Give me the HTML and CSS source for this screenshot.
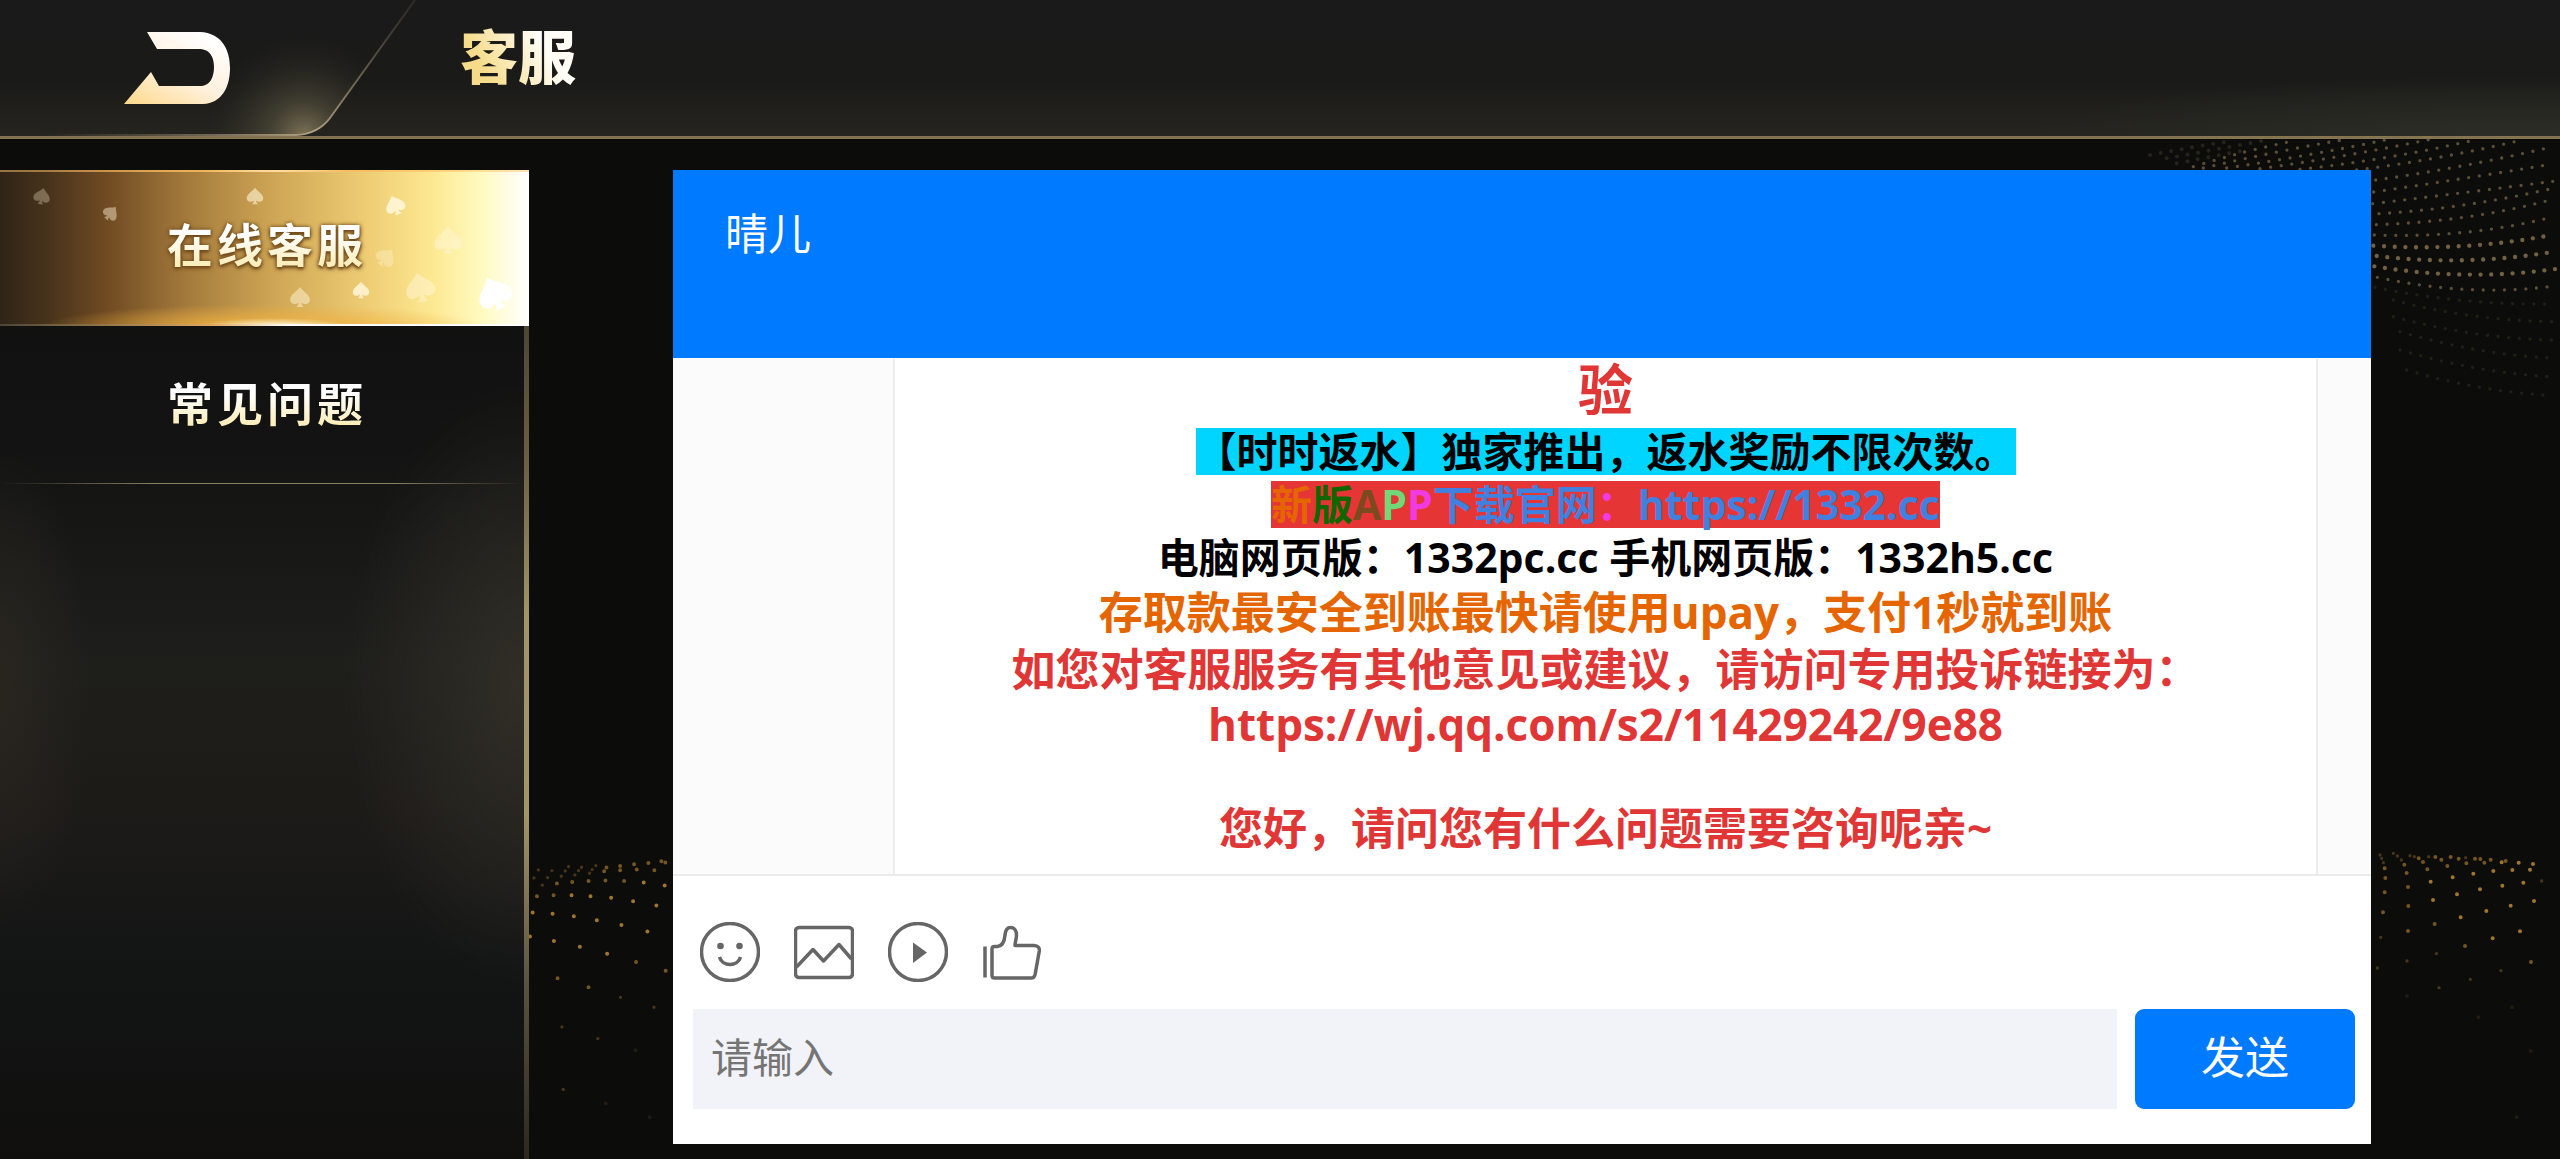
FILE: index.html
```html
<!DOCTYPE html>
<html lang="zh-CN">
	<head>
		<title>客服</title>
		<meta charset="utf-8">
		<meta name="viewport" content="width=device-width, initial-scale=1">
		<link rel="stylesheet" href="styles.css">
	</head>
	<body>
		<!-- gold dot waves behind the page -->
		<svg class="dots dots-top" viewBox="0 117 1500 900" aria-hidden="true">
			<g class="far">
				<path d="M270 165Q400 140 520 122"/>
				<path d="M320 175Q460 150 610 122"/>
				<path d="M350 190Q480 165 560 150"/>
			</g>
			<g class="near">
				<path d="M400 200Q560 150 705 122"/>
				<path d="M430 204Q640 155 840 121"/>
				<path d="M500 204Q760 165 975 120"/>
				<path d="M600 206Q860 170 1110 118"/>
				<path d="M720 208Q980 180 1243 120"/>
				<path d="M890 210Q1130 180 1377 122"/>
				<path d="M947 240Q1200 205 1470 142"/>
				<path d="M941 276Q1220 235 1478 192"/>
				<path d="M938 311Q1240 275 1486 243"/>
				<path d="M957 341Q1220 325 1487 263"/>
				<path d="M949 374Q1220 365 1459 303"/>
				<path d="M943 405Q1220 415 1469 353"/>
			</g>
			<g class="bright">
				<path d="M940 437Q1220 455 1480 404"/>
				<path d="M950 468Q1220 500 1487 454"/>
				<path d="M943 499Q1220 545 1493 506"/>
			</g>
			<g class="near"><path d="M952 532Q1220 590 1467 560"/></g>
			<g class="faint">
				<path d="M945 562Q1200 615 1471 612"/>
				<path d="M1000 600Q1220 660 1476 665"/>
				<path d="M1000 650Q1240 715 1478 720"/>
				<path d="M1020 695Q1260 765 1478 774"/>
				<path d="M1020 750Q1260 820 1475 830"/>
				<path d="M1040 810Q1260 875 1470 886"/>
			</g>
		</svg>
		<svg class="dots dots-left" viewBox="360 0 460 1077" aria-hidden="true">
			<path class="p-dim" d="M415 209h0M456 211h0M506 199h0M545 201h0M402 233h0M443 232h0M496 212h0M536 211h0M588 196h0M577 208h0M427 255h0M484 228h0M525 224h0M569 219h0M662 592h0M486 681h0M763 622h0M594 716h0M490 869h0M365 825h0"/>
			<path class="p-mid" d="M471 250h0M517 245h0M566 242h0M613 213h0M620 202h0M661 197h0M661 210h0M703 192h0M711 208h0M746 188h0M785 183h0M797 187h0M764 210h0M617 241h0M673 242h0M411 288h0M461 285h0M566 562h0M473 535h0M709 486h0M798 512h0"/>
			<path class="p-hot" d="M732 247h0M795 256h0M515 285h0M572 288h0M634 293h0M700 303h0M770 316h0M398 337h0M458 341h0M522 348h0M591 360h0M665 375h0M743 394h0M390 409h0M462 423h0M540 440h0M622 461h0"/>
			<path class="p-faint" d="M707 751h0M618 911h0M750 953h0"/>
		</svg>
		<svg class="dots dots-right" viewBox="0 0 600 1077" aria-hidden="true">
			<path class="p-dim" d="M60 165h0M65 175h0M70 188h0M100 160h0M112 168h0M124 180h0M150 167h0M163 170h0M206 170h0M317 173h0M52 504h0M141 483h0M229 461h0M331 538h0M423 512h0M545 243h0M62 412h0M237 563h0"/>
			<path class="p-mid" d="M74 205h0M76 234h0M74 277h0M69 337h0M133 194h0M140 219h0M144 261h0M176 175h0M189 186h0M226 171h0M244 179h0M272 171h0M296 176h0M345 176h0M361 177h0M392 179h0M202 208h0M262 198h0M319 190h0M373 188h0M145 318h0M144 393h0M224 372h0M315 438h0M513 486h0M437 183h0"/>
			<path class="p-hot" d="M425 187h0M476 188h0M519 192h0M510 209h0M457 210h0M400 213h0M340 221h0M278 232h0M212 245h0M219 300h0M291 283h0M360 268h0M427 257h0M490 248h0M522 303h0M452 317h0M379 333h0M302 352h0M480 394h0M398 415h0"/>
			<path class="p-faint" d="M141 588h0M456 622h0M355 652h0M512 753h0M470 952h0"/>
		</svg>

		<header class="topbar">
			<button class="back" type="button" aria-label="返回">
				<svg viewBox="0 0 420 136" width="420" height="136">
					<defs>
						<linearGradient id="arrowFill" x1="0" y1="1" x2="0.7" y2="0">
							<stop offset="0" stop-color="#ffd98a"/>
							<stop offset="0.5" stop-color="#fff0dc"/>
							<stop offset="1" stop-color="#ffffff"/>
						</linearGradient>
						<radialGradient id="cornerGlow" gradientUnits="userSpaceOnUse" cx="304" cy="136" r="100">
							<stop offset="0" stop-color="#8e8060" stop-opacity="0.85"/>
							<stop offset="0.35" stop-color="#5c5742" stop-opacity="0.55"/>
							<stop offset="1" stop-color="#2c2b24" stop-opacity="0"/>
						</radialGradient>
						<linearGradient id="edgeLine" gradientUnits="userSpaceOnUse" x1="40" y1="136" x2="415" y2="0">
							<stop offset="0" stop-color="#8a7a5c" stop-opacity="0"/>
							<stop offset="0.65" stop-color="#b0a080"/>
							<stop offset="1" stop-color="#5a5242" stop-opacity="0.3"/>
						</linearGradient>
					</defs>
					<path d="M0 135H296Q318 134 330 118L415 0H0Z" fill="url(#cornerGlow)"/>
					<path d="M0 135H296Q318 134 330 118L415 0" fill="none" stroke="url(#edgeLine)" stroke-width="2"/>
					<path d="M147 32H200C222 33 230 50 230 68C230 87 222 103 203 104H124L151 72L159 86H202C210 85 214 77 214 67C214 57 210 50 201 49H157Z" fill="url(#arrowFill)"/>
				</svg>
			</button>
			<h1 class="title">客服</h1>
		</header>

		<main class="page">
			<nav class="sidebar">
				<button class="tab active" type="button">
					<svg class="spades" viewBox="0 0 529 156" width="529" height="156" aria-hidden="true">
						<defs>
							<path id="spade" d="M0-11C3-6 11-3 11 3C11 8 5 9 1.500 6C2 9 3 10 4 11H-4C-3 10-2 9-1.500 6C-5 9-11 8-11 3C-11-3-3-6 0-11Z"/>
						</defs>
						<g fill="#fff6d8">
							<use href="#spade" transform="translate(42 24) rotate(12) scale(.75)" opacity=".3"/>
							<use href="#spade" transform="translate(111 41) rotate(40) scale(.7)" opacity=".45"/>
							<use href="#spade" transform="translate(255 24) scale(.75)" opacity=".6"/>
							<use href="#spade" transform="translate(395 33) rotate(-20) scale(.9)" opacity=".9"/>
							<use href="#spade" transform="translate(448 68) scale(1.250)" opacity=".5"/>
							<use href="#spade" transform="translate(386 85) rotate(40) scale(.9)" opacity=".35"/>
							<use href="#spade" transform="translate(300 125) scale(.9)" opacity=".5"/>
							<use href="#spade" transform="translate(361 118) scale(.75)" opacity=".85"/>
							<use href="#spade" transform="translate(420 115) rotate(-12) scale(1.350)" opacity=".5"/>
							<use href="#spade" transform="translate(494 121) rotate(-25) scale(1.550)" fill="#fff"/>
						</g>
					</svg>
					<span class="tab-text">在线客服</span>
				</button>
				<button class="tab" type="button">
					<span class="tab-text">常见问题</span>
				</button>
			</nav>

			<section class="chat">
				<h2 class="chat-name">晴儿</h2>

				<div class="messages">
					<div class="bubble">
						<p class="first">验</p>
						<p><span class="mark cyan">【时时返水】独家推出，返水奖励不限次数。</span></p>
						<p><span class="mark red"><span class="c-orange">新</span><span class="c-green">版</span><span class="c-brown">A</span><span class="c-lime">P</span><span class="c-pink">P</span>下载官网<span class="c-pink">：</span>https://1332.cc</span></p>
						<p>电脑网页版：1332pc.cc 手机网页版：1332h5.cc</p>
						<p class="big pay">存取款最安全到账最快请使用upay，支付1秒就到账</p>
						<p class="big warn">如您对客服服务有其他意见或建议，请访问专用投诉链接为：</p>
						<p class="big warn short">https://wj.qq.com/s2/11429242/9e88</p>
						<p class="short"><br></p>
						<p class="big warn short">您好，请问您有什么问题需要咨询呢亲~</p>
					</div>
				</div>

				<div class="composer">
					<div class="tools">
						<button type="button" aria-label="表情">
							<svg viewBox="0 0 60 60">
								<circle cx="30" cy="30" r="28.500"/>
								<path d="M19.500 35C22 45 38 45 40.500 35"/>
								<circle class="solid" cx="20.500" cy="24" r="3.300"/>
								<circle class="solid" cx="39.500" cy="24" r="3.300"/>
							</svg>
						</button>
						<button type="button" aria-label="图片">
							<svg viewBox="0 0 60 60">
								<rect x="1.500" y="5.500" width="57" height="50" rx="3.500"/>
								<path d="M2.500 45L19 27.500L29.500 39L45 22.500L57.500 37"/>
							</svg>
						</button>
						<button type="button" aria-label="视频">
							<svg viewBox="0 0 60 60">
								<circle cx="30" cy="30" r="28.500"/>
								<path class="solid" d="M25 20.500L39 30.500L25 41Z"/>
							</svg>
						</button>
						<button type="button" aria-label="评价">
							<svg viewBox="0 0 60 60">
								<path d="M3 24.500V55.500"/>
								<path d="M10 27Q10 24.500 12.500 24.500H15.500C21 24 22.500 19 23 13C23.500 8 25.500 5.500 28.500 5.500C32.500 5.500 34.500 9 34.500 13C34.500 17 33 20 33 23.500H52Q58 24 57.300 29L53 53Q52 56 49.500 56H12.500Q10 56 10 53.500Z"/>
							</svg>
						</button>
					</div>
					<form class="send-row">
						<input class="text" type="text" placeholder="请输入" aria-label="请输入">
						<button class="send" type="button">发送</button>
					</form>
				</div>
			</section>
		</main>
	</body>
</html>
```

FILE: styles.css
```css
* {
	box-sizing: border-box;
}

body {
	margin: 0;
	min-height: 100vh;
	display: flex;
	flex-direction: column;
	position: relative;
	background-color: #0c0c0b;
	color: #000;
	font-family: "Open Sans", "Noto Sans CJK SC", sans-serif;
	font-size: 41px;
}

button {
	margin: 0;
	padding: 0;
	border: none;
	background: none;
	color: inherit;
	font: inherit;
	cursor: pointer;
}

h1, h2, p {
	margin: 0;
}

svg {
	display: block;
}

/* background dots */
.dots {
	position: absolute;
	fill: none;
	stroke: #a2752c;
	stroke-width: 12;
	stroke-linecap: round;
	pointer-events: none;
}

.dots-top {
	top: 139px;
	right: 0;
	width: 500px;
	height: 300px;
	stroke: #7d6a48;
}

.dots-top path {
	stroke-dasharray: 0 32;
}

.dots-top .far {
	opacity: 0.25;
}

.dots-top .near {
	opacity: 0.7;
	stroke-width: 10;
}

.dots-top .bright {
	opacity: 0.9;
	stroke-width: 13;
}

.dots-top .faint {
	opacity: 0.2;
	stroke-width: 10;
}

.dots-left {
	left: 520px;
	bottom: 0;
	width: 153px;
	height: 359px;
}

.dots-right {
	right: 0;
	bottom: 0;
	width: 200px;
	height: 359px;
}

.p-faint {
	opacity: 0.15;
}

.p-dim {
	opacity: 0.4;
	stroke-width: 10;
}

.p-mid {
	opacity: 0.7;
}

/* top bar */
.topbar {
	display: flex;
	align-items: flex-start;
	position: relative;
	height: 139px;
	border-bottom: 3px solid #84744f;
	background:
		radial-gradient(ellipse 500px 60px at 98% 100%, #2c2d26, transparent),
		linear-gradient(#1b1a1b, #1a1a18 60%, #25241f);
}

.title {
	margin-left: 40px;
	padding-top: 27px;
	font-size: 58px;
	line-height: 60px;
	font-weight: 900;
	color: transparent;
	background: linear-gradient(60deg, #f6dc8a 20%, #fffdf6 65%);
	background-clip: text;
	-webkit-background-clip: text;
}

.page {
	flex: 1;
	display: flex;
	position: relative;
	padding-top: 31px;
}

/* left menu */
.sidebar {
	flex: none;
	width: 529px;
	border-right: 5px solid;
	border-image: linear-gradient(#2a271d, #6b6144 30%, #a39468 45%, #a39468 65%, #5b5340 82%, #2a2820) 1;
	background:
		radial-gradient(ellipse 180px 300px at 100% 52%, #302e27, transparent),
		radial-gradient(ellipse 90px 240px at 0 52%, #292620, transparent),
		linear-gradient(#0f0f0e, #121312 28%, #1e1e1b 50%, #1d1b18 65%, #131515 80%, #100f0e);
}

.tab {
	display: block;
	position: relative;
	width: 100%;
	height: 158px;
	font-size: 46px;
	line-height: 60px;
	font-weight: 700;
	text-align: left;
	padding: 0 0 4px 167px;
}

.tab::after {
	content: "";
	position: absolute;
	left: 0;
	right: 0;
	bottom: 0;
	height: 1px;
	background: linear-gradient(90deg, transparent, #8b8163 30%, #8b8163 75%, transparent);
}

.tab-text {
	position: relative;
	letter-spacing: 4px;
	color: transparent;
	background: linear-gradient(#fff 35%, #fbedb8 85%);
	background-clip: text;
	-webkit-background-clip: text;
}

.active {
	width: 529px;
	height: 156px;
	padding-bottom: 10px;
	background:
		radial-gradient(ellipse 75px 8px at 52% 100%, #fffbe0, transparent),
		radial-gradient(ellipse 220px 22px at 50% 100%, #eeb040, transparent),
		linear-gradient(90deg, #2f2417, #4a351c 10%, #6f4a22 20%, #a67c3d 36%, #cfa655 52%, #efce75 70%, #fde993 82%, #fffac0 91%, #fff);
	border-top: 2px solid rgba(255, 196, 110, 0.5);
}

.active::after {
	height: 2px;
	background: linear-gradient(90deg, #4c4438, #e0a860 40%, #fff 55%, #fff);
}

.active .tab-text {
	filter: drop-shadow(0 0 2px #6b4718) drop-shadow(0 2px 1px #7a5220);
}

.spades {
	position: absolute;
	left: 0;
	top: 0;
}

/* chat panel */
.chat {
	flex: 1;
	display: flex;
	flex-direction: column;
	margin: 0 189px 15px 144px;
	background-color: #fff;
}

.chat-name {
	height: 188px;
	padding: 36px 52px;
	background-color: #007aff;
	color: #fff;
	font-size: 43px;
	line-height: 56px;
	font-weight: 400;
}

.messages {
	flex: 1;
	display: flex;
	flex-direction: column;
	justify-content: flex-end;
	background-color: #fbfbfb;
	border-bottom: 2px solid #ebebeb;
}

.bubble {
	margin: 0 53px 0 220px;
	padding-bottom: 20px;
	border-left: 2px solid #ededed;
	border-right: 2px solid #ededed;
	background-color: #fff;
	text-align: center;
	font-weight: 700;
	line-height: 53px;
}

.bubble .first {
	margin-bottom: 6px;
	color: #e03636;
	font-size: 55px;
	line-height: 60px;
}

.mark {
	display: inline-block;
	line-height: 47px;
}

.cyan {
	background-color: #00d5ff;
}

.red {
	background-color: #e63535;
	color: #4080df;
}

.c-orange {
	color: #e56600;
}

.c-green {
	color: #116600;
}

.c-brown {
	color: #7c4a1e;
}

.c-lime {
	color: #70d878;
}

.c-pink {
	color: #f03be0;
}

.bubble .big {
	font-size: 44px;
	line-height: 57px;
}

.pay {
	color: #e56600;
}

.warn {
	color: #e03636;
}

.bubble .short {
	line-height: 52px;
}

/* input area */
.composer {
	padding: 46px 16px 35px 20px;
}

.tools {
	display: flex;
	gap: 34px;
	padding: 0 7px;
	margin-bottom: 27px;
}

.tools button {
	width: 60px;
	height: 60px;
}

.tools svg {
	fill: none;
	stroke: #666;
	stroke-width: 3.5;
	stroke-linejoin: round;
}

.tools .solid {
	fill: #666;
	stroke: none;
}

.send-row {
	display: flex;
	gap: 18px;
	margin: 0;
}

.text {
	flex: 1;
	min-width: 0;
	height: 100px;
	padding: 0 18px 4px;
	border: none;
	background-color: #f2f3f8;
	font: inherit;
}

.text::placeholder {
	color: #757575;
}

.send {
	width: 220px;
	height: 100px;
	padding-bottom: 8px;
	border-radius: 9px;
	background-color: #007aff;
	color: #fff;
	font-size: 44px;
}
```
